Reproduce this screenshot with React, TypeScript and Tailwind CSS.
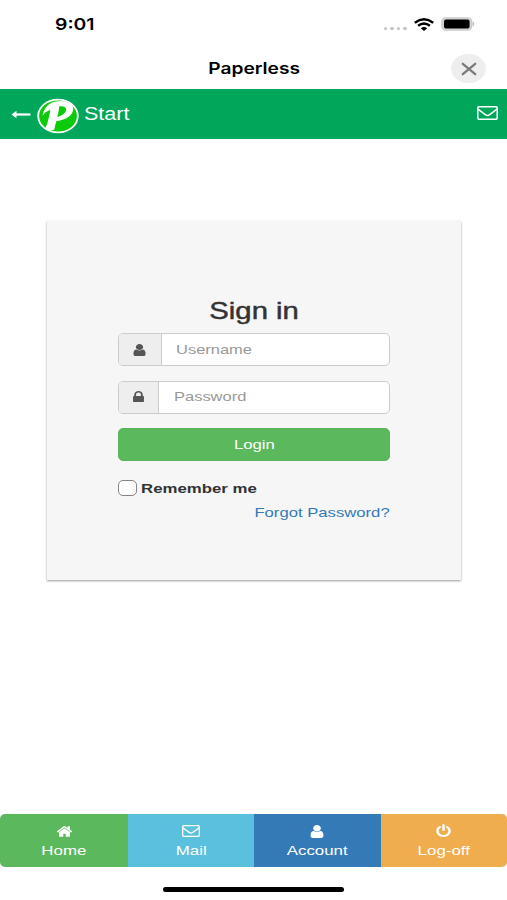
import type { ReactNode } from "react";

const paths = {
  user: "M1536 1399q0 109-62.5 187t-150.5 78h-854q-88 0-150.5-78t-62.5-187q0-85 8.5-160.5t31.5-152 58.5-131 94-89 134.5-34.5q131 128 313 128t313-128q76 0 134.5 34.5t94 89 58.5 131 31.5 152 8.5 160.5zm-256-887q0 159-112.5 271.5t-271.5 112.5-271.5-112.5-112.5-271.5 112.5-271.5 271.5-112.5 271.5 112.5 112.5 271.5z",
  lock: "M640 768h512v-192q0-106-75-181t-181-75-181 75-75 181v192zm832 96v576q0 40-28 68t-68 28h-960q-40 0-68-28t-28-68v-576q0-40 28-68t68-28h32v-192q0-184 132-316t316-132 316 132 132 316v192h32q40 0 68 28t28 68z",
  home: "M1472 992v480q0 26-19 45t-45 19h-384v-384h-256v384h-384q-26 0-45-19t-19-45v-480q0-1 .5-3t.5-3l575-474 575 474q1 2 1 6zm223-69l-62 74q-8 9-21 11h-3q-13 0-21-7l-692-577-692 577q-12 8-24 7-13-2-21-11l-62-74q-8-10-7-23.5t11-21.5l719-599q32-26 76-26t76 26l244 204v-195q0-14 9-23t23-9h192q14 0 23 9t9 23v408l219 182q10 8 11 21.5t-7 23.5z",
  power: "M1664 896q0 156-61 298t-164 245-245 164-298 61-298-61-245-164-164-245-61-298q0-182 80.5-343t226.5-270q43-32 95.5-25t83.5 50q32 42 24.5 94.5t-49.5 84.5q-98 74-151.5 181t-53.5 228q0 104 40.5 198.5t109.5 163.5 163.5 109.5 198.5 40.5 198.5-40.5 163.5-109.5 109.5-163.5 40.5-198.5q0-121-53.5-228t-151.5-181q-42-32-49.5-84.5t24.5-94.5q31-43 84-50t95 25q146 109 226.5 270t80.5 343zm-640-768v640q0 52-38 90t-90 38-90-38-38-90v-640q0-52 38-90t90-38 90 38 38 90z",
};

function Glyph({ name, className }: { name: keyof typeof paths; className: string }) {
  return (
    <svg viewBox="0 0 1792 1792" preserveAspectRatio="none" fill="currentColor" className={className}>
      <path d={paths[name]} />
    </svg>
  );
}

function Envelope({ className }: { className: string }) {
  return (
    <svg viewBox="0 0 21 14" preserveAspectRatio="none" fill="none" stroke="currentColor" strokeWidth="1.5" className={className}>
      <rect x="0.8" y="0.8" width="19.4" height="12.4" rx="1.1" />
      <path d="M1 3.2 8.3 8.6Q10.5 10.2 12.7 8.6L20 3.2" />
    </svg>
  );
}

function StatusBar() {
  return (
    <div className="flex h-12 items-center justify-between pl-[55px] pr-[32px] font-['Inter',sans-serif]">
      <span className="origin-left scale-x-[1.21] text-[16px] font-semibold leading-5">9:01</span>
      <div className="flex items-center">
        <div className="mr-[7px] mt-[9px] flex gap-[3px]">
          {[0, 1, 2, 3].map((n) => (
            <i key={n} className="h-[3.5px] w-[3.6px] rounded-full bg-[#c4c4c4]" />
          ))}
        </div>
        <svg viewBox="0 0 20 13" className="mr-[7px] h-[13px] w-5" fill="none" stroke="#000" strokeWidth="2.4">
          <path d="M.8 4.7Q10-2 19.2 4.7M4.1 7.8Q10 3.3 15.9 7.8" />
          <path d="M6.8 10.3Q10 7.6 13.2 10.3L10 12.9Z" fill="#000" stroke="none" />
        </svg>
        <svg viewBox="0 0 34 14" className="h-[14px] w-[34px]">
          <rect x=".9" y=".9" width="29.8" height="12.2" rx="4" fill="#d4d4d4" stroke="#cbcbcb" strokeWidth="1.4" />
          <rect x="3" y="2.6" width="25.6" height="8.9" rx="2" fill="#000" />
          <path d="M32 5q2 2 0 4z" fill="#bbb" stroke="#bbb" strokeWidth=".6" />
        </svg>
      </div>
    </div>
  );
}

function Field({ icon, label, addon }: { icon: ReactNode; label: string; addon: string }) {
  return (
    <div className="flex h-[33px] overflow-hidden rounded-[5px] border border-[#ccc] bg-white">
      <div className={`flex shrink-0 items-center justify-center border-r border-[#ccc] bg-[#eee] text-[#555] ${addon}`}>{icon}</div>
      <div className="flex items-center pl-[14.5px]">
        <span className="origin-left scale-x-[1.23] text-[13.4px] leading-4 text-[#999]">{label}</span>
      </div>
    </div>
  );
}

const tabs = [
  { label: "Home", color: "w-[128px] bg-[#5cb85c]", icon: <Glyph name="home" className="h-[15px] w-[17px]" /> },
  { label: "Mail", color: "w-[126px] bg-[#5bc0de]", icon: <Envelope className="h-[12px] w-[18px]" /> },
  { label: "Account", color: "w-[126.5px] bg-[#337ab7]", icon: <Glyph name="user" className="h-[15px] w-[18px]" /> },
  { label: "Log-off", color: "flex-1 bg-[#f0ad4e]", icon: <Glyph name="power" className="h-[14px] w-[17px]" /> },
];

export default function App() {
  return (
    <div className="flex h-[900px] w-[507px] flex-col overflow-hidden bg-white font-['Liberation_Sans',Arial,sans-serif] text-black">
      <StatusBar />
      <div className="grid h-[41px] grid-cols-[1fr_auto_1fr] items-center pr-[21px] font-['Inter',sans-serif]">
        <span className="col-start-2 ml-[22px] scale-x-[1.235] text-[15.5px] font-semibold leading-5">Paperless</span>
        <button className="flex h-[29px] w-[35px] items-center justify-center justify-self-end rounded-[50%] bg-[#eee]">
          <svg viewBox="0 0 16 14" className="h-[14px] w-4" fill="none" stroke="#7b7b7b" strokeWidth="2.3" strokeLinecap="round">
            <path d="M1.8 1.8 14.2 12.2M14.2 1.8 1.8 12.2" />
          </svg>
        </button>
      </div>

      <header className="flex h-[50px] items-center bg-[#00a65a] pl-[11px] pr-[9px] text-white">
        <svg viewBox="0 0 20 10" className="h-[10px] w-5" fill="none" stroke="currentColor" strokeWidth="2.2">
          <path d="M4 5.5H19.5" />
          <path d="M.5 5.5 5.5 1.7V9.3Z" fill="currentColor" stroke="none" />
        </svg>
        <svg viewBox="0 0 42 36" className="ml-[6px] mt-[3px] h-9 w-[42px]">
          <ellipse cx="21" cy="18" rx="19.8" ry="16.4" fill="#0bcb0b" stroke="#fff" strokeWidth="1.8" />
          <path fill="#fff" fillRule="evenodd" d="M5.5 17.5Q7 8.5 15 4.5Q21 1.8 29 3.6Q36.6 6 36.2 11.3Q35 21 19.4 23.2Q18 27 17.2 31.8Q12.5 34 8.4 30.3Q11.6 23 13.4 11.8Q9.3 13 5.5 17.5ZM20.2 18.9Q28 17.2 29.2 12Q29.6 7.6 22.2 8.2Q22.2 13 20.2 18.9Z" />
        </svg>
        <span className="ml-[5px] origin-left scale-x-[1.23] text-[17.5px] leading-5">Start</span>
        <Envelope className="ml-auto mb-[3px] h-[14px] w-[21px]" />
      </header>

      <main className="flex flex-1 flex-col pl-[47px] pt-[82px]">
        <section className="flex h-[359px] w-[414px] flex-col bg-[#f6f6f6] px-[71px] pt-[76px] shadow-[0_1px_2px_rgba(0,0,0,0.4)]">
          <h1 className="h-9 self-center text-[23.6px] leading-[28px] text-[#333] scale-x-[1.24] [-webkit-text-stroke:0.45px_#333]">Sign in</h1>
          <Field label="Username" addon="w-[42.5px]" icon={<Glyph name="user" className="h-[14px] w-[17px]" />} />
          <div className="h-[14.5px]" />
          <Field label="Password" addon="w-[40px]" icon={<Glyph name="lock" className="h-[14px] w-[17px]" />} />
          <button className="mt-[14.5px] flex h-[33px] shrink-0 items-center justify-center rounded-[5px] border border-[#58b558] bg-[#5cb85c] text-white">
            <span className="scale-x-[1.25] text-[13.4px] leading-4">Login</span>
          </button>
          <label className="mt-[19px] flex h-4 items-center">
            <input type="checkbox" className="mb-px h-4 w-[19px] appearance-none rounded-[5px] border-[1.5px] border-[#858585] bg-white" />
            <span className="ml-[4px] mt-px origin-left scale-x-[1.255] text-[13.4px] font-bold leading-4 text-[#333]">Remember me</span>
          </label>
          <a className="mt-[9px] origin-right scale-x-[1.245] self-end text-[13.4px] leading-4 text-[#337ab7]">Forgot Password?</a>
        </section>
      </main>

      <nav className="flex h-[53px] overflow-hidden rounded-[5px] text-white">
        {tabs.map((tab) => (
          <div key={tab.label} className={`flex flex-col items-center pt-[10px] ${tab.color}`}>
            <div className="flex h-[14px] items-center">{tab.icon}</div>
            <span className="mt-[5px] scale-x-[1.26] text-[13.4px] leading-4">{tab.label}</span>
          </div>
        ))}
      </nav>
      <div className="flex h-[33px] justify-center pt-[20px]">
        <div className="h-[5px] w-[181px] rounded-full bg-black" />
      </div>
    </div>
  );
}
